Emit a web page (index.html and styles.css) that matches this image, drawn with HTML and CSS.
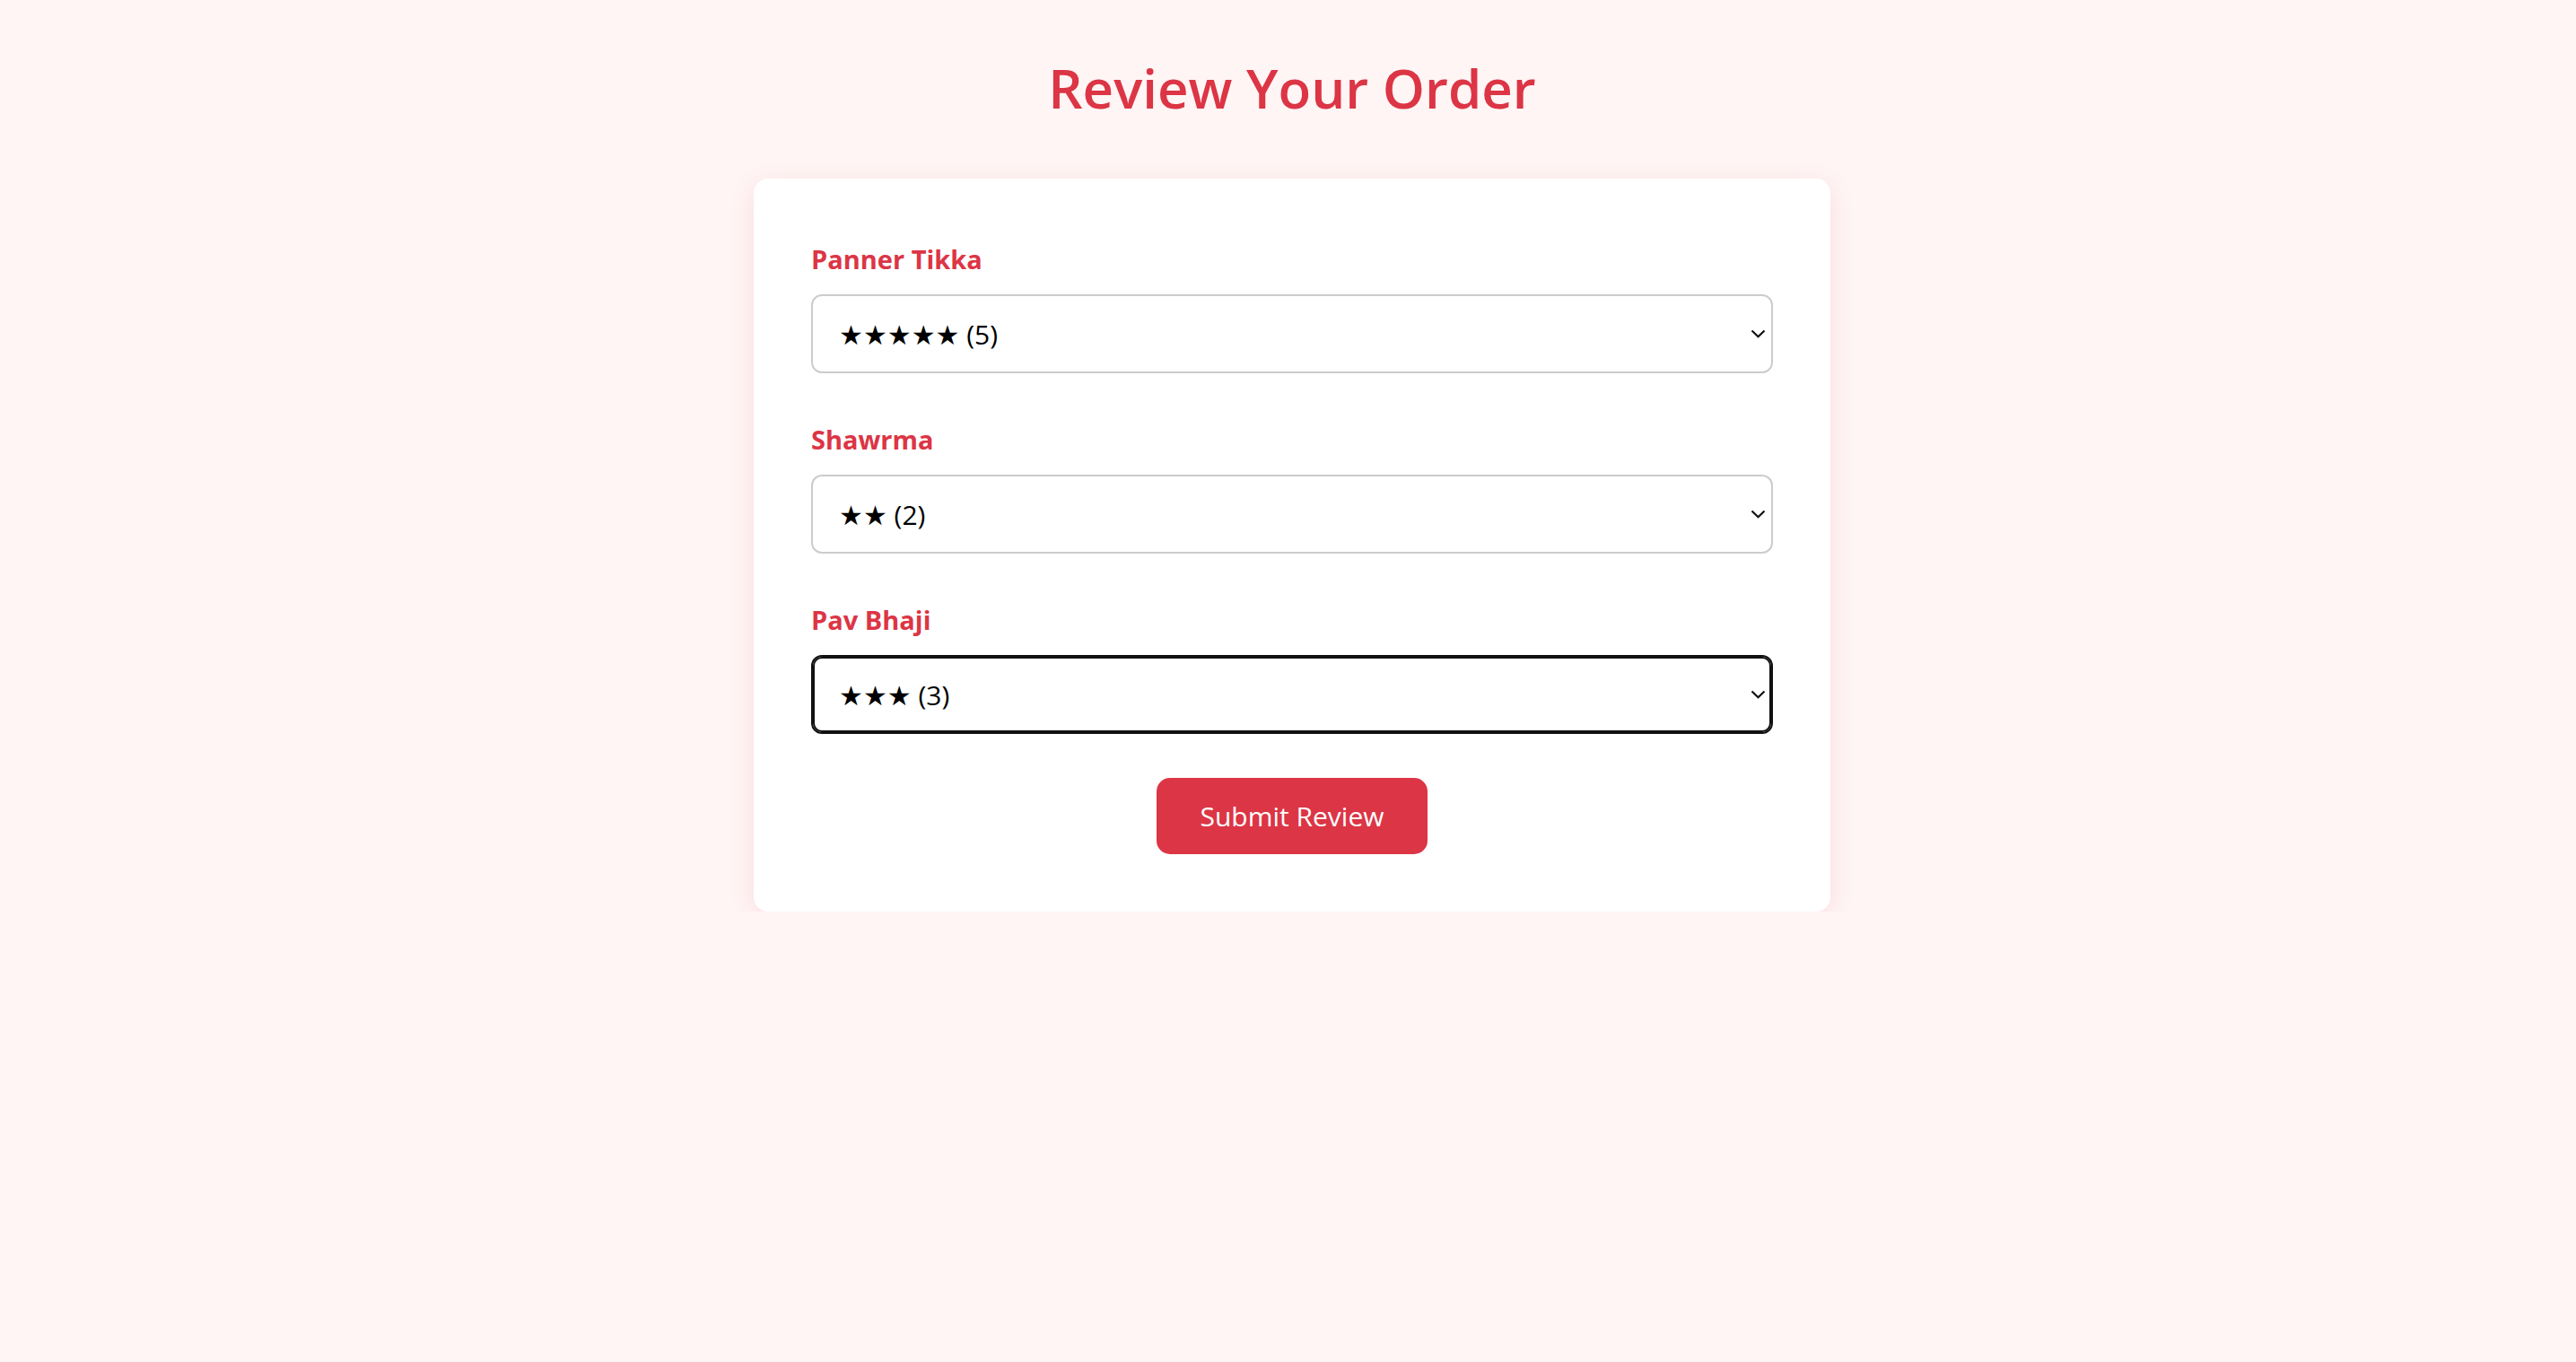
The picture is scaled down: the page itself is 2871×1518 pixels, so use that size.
FILE: index.html
```html
<!DOCTYPE html>
<html lang="en">
<head>
<meta charset="utf-8">
<title>Review Your Order</title>
<link rel="stylesheet" href="styles.css">
</head>
<body>
<main class="page">
  <h1 class="title">Review Your Order</h1>
  <form class="card">
    <div class="field">
      <label class="field-label" for="r1">Panner Tikka</label>
      <div class="select-wrap">
        <select id="r1" class="rating-select">
          <option>★ (1)</option>
          <option>★★ (2)</option>
          <option>★★★ (3)</option>
          <option>★★★★ (4)</option>
          <option selected>★★★★★ (5)</option>
        </select>
        <svg class="chevron" width="17" height="10" viewBox="0 0 17 10"><path d="M1.5 1.5 L8.5 8.3 L15.5 1.5" fill="none" stroke="#111" stroke-width="2.2"/></svg>
      </div>
    </div>
    <div class="field">
      <label class="field-label" for="r2">Shawrma</label>
      <div class="select-wrap">
        <select id="r2" class="rating-select">
          <option>★ (1)</option>
          <option selected>★★ (2)</option>
          <option>★★★ (3)</option>
          <option>★★★★ (4)</option>
          <option>★★★★★ (5)</option>
        </select>
        <svg class="chevron" width="17" height="10" viewBox="0 0 17 10"><path d="M1.5 1.5 L8.5 8.3 L15.5 1.5" fill="none" stroke="#111" stroke-width="2.2"/></svg>
      </div>
    </div>
    <div class="field">
      <label class="field-label" for="r3">Pav Bhaji</label>
      <div class="select-wrap">
        <select id="r3" class="rating-select is-focused">
          <option>★ (1)</option>
          <option>★★ (2)</option>
          <option selected>★★★ (3)</option>
          <option>★★★★ (4)</option>
          <option>★★★★★ (5)</option>
        </select>
        <svg class="chevron" width="17" height="10" viewBox="0 0 17 10"><path d="M1.5 1.5 L8.5 8.3 L15.5 1.5" fill="none" stroke="#111" stroke-width="2.2"/></svg>
      </div>
    </div>
    <button type="button" class="submit">Submit Review</button>
  </form>
</main>
</body>
</html>
```
FILE: styles.css
```css
html, body {
  margin: 0;
  padding: 0;
}

body {
  background: #fff5f5;
  font-family: "Open Sans", "DejaVu Sans", sans-serif;
  color: #000;
}

.page {
  display: flex;
  flex-direction: column;
  align-items: center;
  padding: 61px 0 0 9px;
}

.title {
  margin: 0 0 64px;
  font-size: 60px;
  line-height: 74px;
  font-weight: 600;
  color: #dc3545;
}

.card {
  box-sizing: border-box;
  width: 1200px;
  background: #fff;
  border-radius: 16px;
  padding: 70px 64px 64px;
  box-shadow: 0 6px 28px rgba(220, 53, 69, 0.12);
  display: flex;
  flex-direction: column;
}

.field + .field {
  margin-top: 54px;
}

.field-label {
  display: block;
  font-size: 29px;
  line-height: 40px;
  font-weight: 700;
  color: #dc3545;
  margin-bottom: 19px;
}

.select-wrap {
  position: relative;
}

.rating-select {
  box-sizing: border-box;
  display: block;
  width: 100%;
  height: 88px;
  margin: 0;
  padding: 0 60px 0 29px;
  border: 2px solid #cccccc;
  border-radius: 12px;
  background: #fff;
  color: #000;
  font-family: "Open Sans", "DejaVu Sans", sans-serif;
  font-size: 30px;
  -webkit-appearance: none;
  appearance: none;
  outline: none;
}

.rating-select.is-focused {
  border-color: #111;
  box-shadow: inset 0 0 0 2px #111;
}

.chevron {
  position: absolute;
  right: 8px;
  top: 50%;
  transform: translateY(-50%);
  pointer-events: none;
}

.submit {
  align-self: center;
  margin-top: 49px;
  box-sizing: border-box;
  width: 302px;
  height: 85px;
  padding: 0;
  border: none;
  border-radius: 15px;
  background: #dc3545;
  color: #fff;
  font-family: "Open Sans", "DejaVu Sans", sans-serif;
  font-size: 30px;
  line-height: 41px;
  cursor: pointer;
}
```
